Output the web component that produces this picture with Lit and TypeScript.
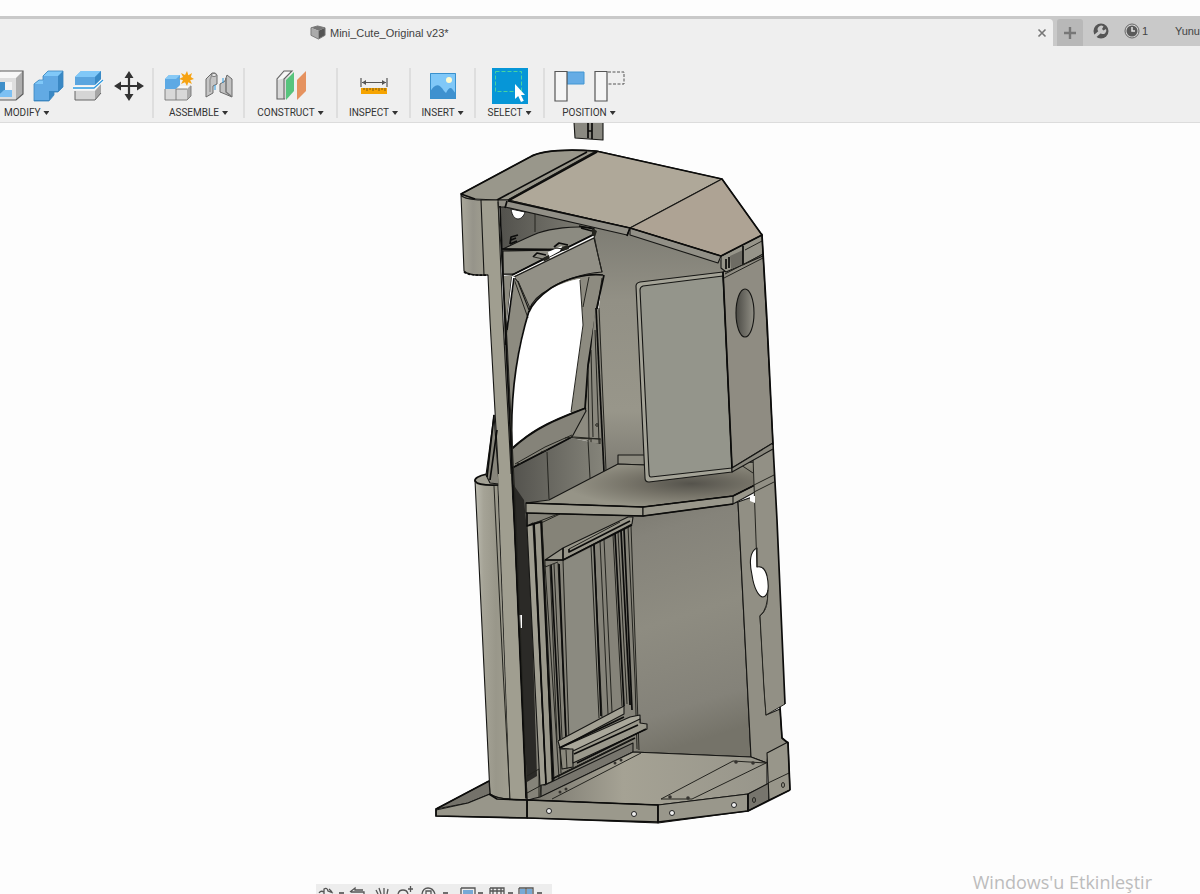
import { LitElement, html, svg, css } from "lit";
import { customElement } from "lit/decorators.js";

const box = (body: unknown) => html`<svg class="icon" viewBox="0 0 32 32" aria-hidden="true">${body}</svg>`;

const icons = {
  shell: box(svg`
    <path d="M-2 8 8 1H31L24 8Z" fill="#f7f7f7"/><path d="M24 8 31 1V24L24 30Z" fill="#aeaeae"/>
    <path d="M-2 8H24V30H-2Z" fill="#dedede"/><path d="M2 12H20V27H2Z" fill="#f3f3f3"/>
    <path d="M2 12H13V20L6 26H2Z" fill="#3f8fc9"/><path d="M6 26 12 20H20V27H5Z" fill="#7cc0f3"/>
    <path d="M-2 8 8 1H31V24L24 30H-2" fill="none" stroke="#5c5c5c" stroke-width="1.2"/>`),
  combine: box(svg`
    <path d="M2 14 7 10H11V6L16 1H31V17L26 22H22V25L17 31H2Z" fill="#3a88c4"/>
    <path d="M2 14H11V6H26V21H17V30H2Z" fill="#62aae4"/>
    <path d="M11 6 16 1H31L26 6ZM2 14 7 10H11V14Z" fill="#80c8f8"/>
    <path d="M2 14 7 10H11V6L16 1H31V17L26 22H22V25L17 31H2Z" fill="none" stroke="#3b86bf" stroke-width=".8"/>`),
  split: box(svg`
    <path d="M3 7 9 1H29V9L23 15H3Z" fill="#5ba5df"/><path d="M3 7 9 1H29L23 7Z" fill="#80c8f8"/>
    <path d="M23 7 29 1V9L23 15Z" fill="#398ac6"/><path d="M3 21H23L29 15V23L23 30H3Z" fill="#d5d5d5"/>
    <path d="M23 21 29 14V23L23 30Z" fill="#a5a5a5"/><path d="M3 21V30H23L29 23" fill="none" stroke="#666"/>
    <path d="M1 18H22L31 10" fill="none" stroke="#fff" stroke-width="3"/>
    <path d="M1 18H22L31 10" fill="none" stroke="#2d99df" stroke-width="1.3"/>`),
  move: box(svg`
    <path d="M17 5V27M6 16H28" stroke="#333" stroke-width="2.2"/>
    <path d="M17 1 21.500 8H12.500ZM17 31 21.500 24H12.500ZM2 16 9 11.500V20.500ZM32 16 25 11.500V20.500Z" fill="#333"/>`),
  component: box(svg`
    <path d="M2 9 6 5H17V15L13 19H2Z" fill="#5da9e4"/><path d="M2 9 6 5H17L13 9Z" fill="#87c9f5"/>
    <path d="M13 19V30H2V19ZM13 19H24V30H13Z" fill="#d8d8d8"/><path d="M13 19 17 16H28L24 19Z" fill="#f8f8f8"/>
    <path d="M24 19 28 15V26L24 30Z" fill="#aaa"/><path d="M2 19V30H24L28 26V16M13 19V30M13 19H24" fill="none" stroke="#777" stroke-width=".9"/>
    <path d="M24 1 25.400 5.300 29 3 27.800 7 31 9 27.200 10.200 29 14 25.300 12.300 24 16 22 12.300 18 14 20 10.200 16 9 20 7 18 3 22 5Z" fill="#f6a313"/>`),
  joint: box(svg`
    <path d="M3 9 9 3Q13 2 14 5V14L10 16V23L3 27Z" fill="#c5c5c5" stroke="#6a6a6a"/>
    <path d="M9 4 7 10V22" fill="none" stroke="#999" stroke-width="1.500"/><ellipse cx="11" cy="5" rx="2.500" ry="1.500" fill="#f0f0f0" stroke="#777"/>
    <path d="M17 14 22 11 24 5 29 9V27L22 24 17 22Z" fill="#c2c2c2" stroke="#6a6a6a"/><path d="M23 8V22L28 26" fill="none" stroke="#777" stroke-width="1.500"/>
    <path d="M12 15V20M20 8V13" stroke="#2d99df"/>`),
  construct: box(svg`
    <path d="M2 10 10 2H16L11 10V29H2Z" fill="#d8d8d8"/><path d="M2 10 10 2H17L11 8Z" fill="#f7f7f7"/>
    <path d="M10 29H2V9L9 1H17L9 9V29" fill="none" stroke="#636363" stroke-width="1.100"/>
    <path d="M11 10 19 2V21L11 30Z" fill="#57c47d"/><path d="M22 10 31 1V21L22 30Z" fill="#e5925f"/>`),
  inspect: box(svg`
    <path d="M3 8V17M29 8V17M4 12.500H28" stroke="#555" stroke-width="1.200"/><path d="M4 12.500 8 10V15ZM28 12.500 24 10V15Z" fill="#555"/>
    <path d="M3 18H29V24H3Z" fill="#f6a400"/><path d="M6 18V20M9 18V21M12 18V20M15 18V21M18 18V20M21 18V21M24 18V20M27 18V21" stroke="#7b5815"/>`),
  insert: box(svg`
    <path d="M3 3H29V29H3Z" fill="#80c8f8"/><path d="M3 22Q10 9 17 21L19 23Q23 15 26 20L29 24V29H3Z" fill="#3e91cf"/>
    <circle cx="22" cy="10" r="3" fill="#fffbd0"/><path d="M3.500 3.500H28.500V28.500H3.500Z" fill="none" stroke="#3a91cd"/>`),
  select: html`<svg class="icon large" viewBox="0 0 36 36" aria-hidden="true">
    <path d="M3.500 3.500H29.500V23.500H3.500Z" fill="none" stroke="#46d3a0" stroke-dasharray="4 2"/>
    <path d="M23 16V31L26.200 28 29 34 31.800 32.700 29 27H33Z" fill="#fff"/></svg>`,
  capture: box(svg`
    <path d="M14 2H31V14H14Z" fill="#65ace5" stroke="#4296d2"/><path d="M2 1.500H14V31H2Z" fill="#f5f5f5" stroke="#555" stroke-width="1.200"/>`),
  revert: box(svg`
    <path d="M15 2H31V14H15" fill="none" stroke="#555" stroke-dasharray="3 1.500"/><path d="M2 1.500H14V31H2Z" fill="#f5f5f5" stroke="#555" stroke-width="1.200"/>`),
};

const groups = [
  { label: "MODIFY", cls: "modify", tools: [["Shell", icons.shell], ["Combine", icons.combine], ["Split body", icons.split], ["Move", icons.move]] },
  { label: "ASSEMBLE", cls: "wide", tools: [["New component", icons.component], ["Joint", icons.joint]] },
  { label: "CONSTRUCT", cls: "wider", tools: [["Offset plane", icons.construct]] },
  { label: "INSPECT", cls: "mid", tools: [["Measure", icons.inspect]] },
  { label: "INSERT", cls: "small", tools: [["Insert image", icons.insert]] },
  { label: "SELECT", cls: "narrow", tools: [["Select", icons.select]] },
  { label: "POSITION", cls: "last", tools: [["Capture position", icons.capture], ["Revert position", icons.revert]] },
];

@customElement("cabinet-model")
class CabinetModel extends LitElement {
  static styles = css`
    :host { display: block; }
    svg { display: block; width: 100%; height: auto; }
    .o { stroke: #161614; stroke-width: 1.1; stroke-linejoin: round; }
    .l { fill: none; stroke: #24241f; stroke-width: 1; }
    .h { fill: none; stroke: #0c0c0b; stroke-width: 1.7; stroke-linejoin: round; }
    .cap { fill: #a3a195; }
  `;

  render() {
    return html`<svg viewBox="0 123 1200 771" role="img" aria-label="Cabinet model">
      <defs>
        <linearGradient id="pod"><stop offset="0" stop-color="#aaa89b"/><stop offset=".5" stop-color="#96948a"/><stop offset="1" stop-color="#a09e90"/></linearGradient>
        <linearGradient id="column"><stop offset="0" stop-color="#bcbbb0"/><stop offset=".25" stop-color="#a5a396"/><stop offset=".6" stop-color="#99978a"/><stop offset="1" stop-color="#a09e90"/></linearGradient>
        <linearGradient id="back" x2=".15" y2="1"><stop offset="0" stop-color="#7b7970"/><stop offset=".15" stop-color="#85837a"/><stop offset=".5" stop-color="#8e8c81"/><stop offset=".85" stop-color="#848279"/><stop offset="1" stop-color="#757369"/></linearGradient>
        <linearGradient id="upper" x2="0" y2="1"><stop offset="0" stop-color="#77766e"/><stop offset=".35" stop-color="#929085"/><stop offset=".75" stop-color="#98968a"/><stop offset="1" stop-color="#79776f"/></linearGradient>
        <linearGradient id="inside"><stop offset="0" stop-color="#53524d"/><stop offset="1" stop-color="#85847a"/></linearGradient>
        <linearGradient id="floor"><stop offset="0" stop-color="#77756c"/><stop offset=".4" stop-color="#a5a294"/><stop offset="1" stop-color="#98968b"/></linearGradient>
        <radialGradient id="shelf" cx=".72" cy=".48" r=".55"><stop offset="0" stop-color="#55534c"/><stop offset=".5" stop-color="#777469"/><stop offset="1" stop-color="#969487"/></radialGradient>
        <linearGradient id="port"><stop offset="0" stop-color="#4b4a45"/><stop offset="1" stop-color="#929086"/></linearGradient>
      </defs>

      <path class="o" fill="#8a8981" d="M574 122H603L603 140 575 138Z"/>
      <path class="h" d="M588 122V138M592 122V139M588 131H592"/>

      <!-- back walls -->
      <path fill="url(#upper)" d="M500 203 628 232 722 260 763 245 773 450 753 480 645 466H619L604 472 596 330 603 275 593 232 503 250Z"/>
      <path class="o" fill="url(#back)" d="M630 514 738 502 751 757 633 752Z"/>
      <path class="o" fill="#918f84" d="M738 502 755 496 768 597Q769 609 760 616L766 715 780 709 782 738 788 743 768 753 767 763 751 757Z"/>

      <!-- inner left cavity -->
      <path fill="url(#inside)" d="M501 205 600 229 594 234 512 276 503 275Z"/>
      <path fill="#fff" stroke="#222" d="M511 209C512 216 515 219 518 219S524 216 525 212Z"/>
      <path class="l" d="M535 213V232"/>
      <path class="o" fill="#8c8b81" d="M503 249Q528 237 538 233C550 229 573 225 594 228L594 234 564 249 503 249Z"/>
      <path class="o" fill="#929187" d="M503 251 560 250 514 274 503 274Z"/>
      <path class="h" d="M502 249 562 250M512 275 593 235M514 278 594 239"/>
      <path d="M548 252 562 246 560 251 549 257Z" fill="#fff"/>
      <path class="h" d="M510 244 511 237 518 235M511 240 516 238M510 244 517 241M533 257 537 253 546 255M554 247 559 243 568 245M579 226 594 229M581 228 592 231"/>
      <path class="l" d="M534 257 543 259M555 248 565 249"/>
      <path fill="#25251f" d="M543 258 549 255 550 260 544 262ZM562 247 568 245 569 249 563 251ZM592 228 597 231 595 237 592 235Z"/>

      <!-- window frame -->
      <path fill="#8d8b80" d="M503 276H514L594 237 604 274C601 295 595 315 595 335L588 407 592 442 571 438V412L583 325 580 279C557 283 536 295 529 311C516 350 512 380 512 470L507 475Z"/>
      <path fill="#fff" d="M580 279C557 283 536 295 529 311C517 350 510 395 512 448C525 434 542 426 571 412L583 325Z"/>
      <path class="o" fill="#929086" d="M514 277 594 238 602 272C583 273 560 281 548 290Q534 297 529 310L518 282Z"/>
      <path class="h" d="M529 312C533 302 541 295 551 288C567 278 588 273 603 275"/>
      <path class="l" d="M514 279 528 318M518 281 530 308M594 235 598 255 602 272M580 280 583 325 571 412M589 277 583 307M602 278 598 305 588 368 586 407"/>
      <path class="h" d="M604 275 597 307 588 365 585 408M529 311C517 350 510 395 512 448M512 277 505 345"/>
      <path fill="#fff" d="M512 276 515 277 508 325 507 320Z"/>
      <path class="h" d="M514 278 507 330"/>

      <!-- narrow post behind window -->
      <path fill="#89877d" d="M595 308 600 310 605 473 590 473 586 407Z"/>
      <path class="h" d="M596 308 604 472"/>
      <path class="l" d="M588 370 589 440M599 308 606 470M591 350 593 437M595 330 600 470M572 438 600 439V444H591V438"/>
      <circle class="l" cx="597" cy="425" r="1.300"/>

      <!-- lower window panel -->
      <path fill="url(#inside)" d="M511 468Q545 450 572 438L600 444 603 473 550 500 526 504 525 800H518Z"/>
      <path class="o" fill="#858379" d="M512 448C529 433 543 423 585 408L586 411 572 437 545 451 512 468Z"/>
      <path class="h" d="M512 449C533 429 555 420 586 408M512 468 545 451 572 437"/>
      <path class="l" d="M515 464 545 447 572 435M547 452 549 499M588 440 590 478M517 463 521 464M541 452 548 450M565 438 574 437 601 439"/>

      <!-- lower cavity and sliding frame -->
      <path fill="#858379" d="M526 513 632 516 637 750 540 798 526 799 520 600Z"/>
      <path fill="#2b2a27" d="M513 484 524 500 530 560 537 776 527 782 522 690Z"/>
      <path class="l" d="M527 776 539 769V798M527 793 540 786"/>
      <path fill="#fff" d="M519 615H522V628H520Z"/>
      <path class="o" fill="#a09e91" d="M527 526 533 523 546 784 540 786Z"/>
      <path class="o" fill="#99978a" d="M534 523 542 521 554 781 546 784Z"/>
      <path fill="#858378" d="M542 521 555 514H620L632 516 563 548 545 560Z"/>
      <path class="l" d="M527 526 558 514M541 523 560 514M542 521 552 782M545 565 559 778"/>
      <path class="h" d="M527 513V526L541 522 553 782M534 523 546 784"/>
      <path fill="#8b8a80" d="M563 562 594 546 600 717 569 740Z"/>
      <path class="l" d="M550 566 557 740M554 564 562 738M558 563 566 740M563 560 569 740M591 546 599 718M594 544 602 717M600 541 608 714M604 539 612 712M613 535 622 706M618 532 627 704M628 526 635 680 637 749M631 526 639 750"/>
      <path class="h" d="M551 565 560 740M559 564 566 737M594 545 601 716M615 533 624 706M621 531 630 705M624 529 632 710"/>
      <path class="o" fill="#98968a" d="M545 560 563 548 628 517 633 517 632 524 563 560Z"/>
      <path class="h" d="M563 548V560M569 549V552L630 521M545 560H563L632 525"/>
      <path class="l" d="M569 549 620 522M545 560V567L558 562"/>
      <path class="o" fill="#a3a194" d="M558 741 624 706V714L560 748Z"/>
      <path class="o" fill="#aaa89b" d="M560 748 630 717 640 715 640 723 573 754V762L569 749Z"/>
      <path class="o" fill="#8a887d" d="M560 749H573V767L562 769Z"/>
      <path class="o" fill="#9a988b" d="M573 751 640 719 640 723 647 724V729L638 733 573 763Z"/>
      <path class="h" d="M559 748 624 717M577 763 646 729M574 754 638 725M552 779 635 738"/>
      <path class="o" fill="#77756d" d="M545 785 633 743V752L541 797V785Z"/>
      <path class="l" d="M555 777 632 739M560 749 561 773M566 750 567 769"/>

      <!-- floor and front lip -->
      <path class="o" fill="url(#floor)" d="M540 797 633 752 751 757 767 763V785L748 794 658 805 527 800Z"/>
      <path class="l" d="M552 799 641 753M661 799 733 761 766 763M692 799 766 763M661 799 692 799M541 785 540 797"/>
      <g fill="#35332f"><circle cx="560" cy="792" r="1.500"/><circle cx="566" cy="789" r="1.500"/><circle cx="615" cy="763" r="1.500"/><circle cx="621" cy="760" r="1.500"/><circle cx="670" cy="797" r="1.800"/><circle cx="688" cy="798" r="1.800"/><circle cx="736" cy="762" r="1.800"/><circle cx="753" cy="763" r="1.800"/></g>
      <path class="o" fill="#9b998c" d="M527 800 658 805V823L527 818Z"/>
      <path class="o" fill="#99978b" d="M658 805 748 794V811L658 823Z"/>
      <path class="o" fill="#77756d" d="M748 794 769 783V800L748 811Z"/>
      <path class="o" fill="#98968a" d="M767 753 788 742 790 790 769 800Z"/>
      <path class="l" d="M768 783 789 773"/>
      <path class="h" d="M527 818 658 822 748 811 790 790M527 800 658 805V822M748 794V811"/>
      <g fill="#eee" stroke="#222"><circle cx="549" cy="811" r="2.500"/><circle cx="634" cy="814" r="2.500"/><circle cx="672" cy="813" r="2.500"/><circle cx="734" cy="805" r="2.500"/></g>
      <g class="l"><ellipse cx="754" cy="800" rx="1.500" ry="2.500"/><ellipse cx="783" cy="785" rx="1.500" ry="2.500"/></g>

      <!-- shelf -->
      <path class="o" fill="#8c8a7f" d="M618 455H645V465L618 464Z"/>
      <path class="o" fill="url(#shelf)" d="M526 503 549 500 618 464 645 465 755 462V485L733 496 643 507Z"/>
      <path class="o" fill="#9e9c8f" d="M526 503 643 507V516L526 513Z"/>
      <path class="o" fill="#99978b" d="M643 507 733 496V504L643 516ZM733 496 755 485V492L733 504Z"/>
      <path class="h" d="M526 503 643 507 733 496 755 485M526 513 643 516 733 504"/>

      <!-- right service wall -->
      <path fill="#929085" d="M753 457 773 448 777 520 785 704 766 715 760 616C766 612 768 605 768 597L757 567Z"/>
      <path class="o" fill="#fff" d="M757 548C750 551 749 562 752 575C754 589 759 597 763 597C769 596 769 585 767 576C765 568 761 566 757 567Z"/>
      <path class="l" d="M753 457 757 567M768 590Q768 609 760 616L764 690 766 715 785 704M738 463 753 473M754 485 774 475M754 492 774 482"/>
      <path d="M750 496H755V503L750 501Z" fill="#fff"/>
      <path class="h" d="M773 445 777 520 785 704M780 707 782 738 788 743 790 790"/>

      <!-- electrical door and side -->
      <path class="o" fill="#a4a397" d="M636 286Q636 283 640 282L723 272 732 472 649 482Q645 482 645 478Z"/>
      <path class="o" fill="#94958b" d="M640 290Q640 287 643 286L723 276 732 468 651 477Q649 477 649 473Z"/>
      <path class="o" fill="#8f8c82" d="M723 272 763 253 773 443 732 468Z"/>
      <path class="o" fill="#89877d" d="M732 468 773 443V449L732 472Z"/>
      <path class="o" fill="#969489" d="M721 256 762 234 763 256 726 272 721 268Z"/>
      <path fill="#6e6c64" d="M730 256 743 250V264L731 269Z"/>
      <path class="h" d="M726 259V269M729 257V268M743 246V265"/>
      <path class="l" d="M724 278 763 258M725 274 763 254M743 265 763 254M745 250 762 241"/>
      <ellipse class="o" cx="745" cy="313" rx="9" ry="24" fill="url(#port)"/>
      <path class="h" d="M762 235 767 320 773 445M723 272 732 468"/>

      <!-- roof -->
      <path class="o" fill="#99978b" d="M461 194 530 157C540 151 565 149 596 151L508 200 497 200 475 199Q462 199 461 194Z"/>
      <path class="o" fill="#afa899" d="M508 200 597 151 722 179 630 228Z"/>
      <path class="o" fill="#aea394" d="M630 228 722 179 762 235 721 256Z"/>
      <path class="o" fill="#929087" d="M497 200 508 200 630 228 627 235 505 207 498 207ZM630 228 721 256 718 263 630 235Z"/>
      <path class="h" d="M475 199 461 194 530 157C540 151 565 149 596 151L722 179 762 235 721 256 630 228 508 201M497 200 587 152M508 201 597 152M507 201 505 208M630 228 627 236"/>

      <!-- front column -->
      <path class="o" fill="url(#pod)" d="M461 195Q463 199 478 200H483L485 275Q469 276 464 271Z"/>
      <path class="o" fill="#a09e90" d="M481 200 498 200 503 320 512 490 514 520 527 799H510L499 484 490 320 488 275H484Z"/>
      <path class="h" d="M464 272Q470 276 488 275" stroke-dasharray="3 1"/>
      <path class="l" d="M498 202 507 340 516 520 527 799"/>
      <path class="h" d="M500 206 505 320 513 490 526 798"/>
      <path class="o" fill="url(#column)" d="M475 480Q476 484 498 485L510 799Q497 799 490 794Z"/>
      <path class="h cap" d="M487 474Q474 477 475 481Q478 486 499 485L497 474Z"/>
      <path class="o" fill="#87857b" d="M494 415 486 475 490 483 499 484Z"/>
      <path class="h" d="M494 415 487 477M497 430 490 480"/>
      <path fill="#a09e90" d="M498 474 511 474 525 799H510Z"/>
      <path class="l" d="M494 486 503 670 510 799"/>

      <!-- left foot -->
      <path class="o" fill="#74726a" d="M436 809 489 781 490 794 468 803Z"/>
      <path class="o" fill="#98968a" d="M436 810 468 803 490 794Q498 800 527 800V818L436 816Z"/>
      <path class="h" d="M489 781 436 809V816L527 818V800L497 799 489 794"/>
    </svg>`;
  }
}

@customElement("app-root")
class AppRoot extends LitElement {
  static styles = css`
    :host { display: flex; flex-direction: column; min-height: 100vh; position: relative; background: #fdfdfd; color: #444; font-family: "Liberation Sans", Arial, sans-serif; overflow: hidden; box-sizing: border-box; padding-top: 16px; }
    * { box-sizing: border-box; }
    button { border: 0; background: none; margin: 0; padding: 0; color: inherit; font: inherit; display: flex; align-items: center; justify-content: center; flex: none; }
    .tabs { display: flex; height: 30px; background: #c9c9c9; }
    .tab { flex: 1; margin-top: 3px; background: #efefef; border-radius: 0 4px 0 0; display: flex; align-items: center; justify-content: space-between; padding: 0 5px 0 310px; }
    .title { display: flex; align-items: center; gap: 4px; font-size: 11px; line-height: 16px; color: #3f3f3f; white-space: nowrap; }
    .cube { width: 16px; height: 15px; }
    .close { width: 12px; height: 12px; }
    .close svg { width: 12px; height: 12px; }
    .actions { width: 147px; display: flex; white-space: nowrap; font-size: 11px; padding-left: 4px; }
    .add { width: 26px; background: #b8b8b8; margin-top: 3px; border-radius: 3px 3px 0 0; }
    .add svg { width: 14px; height: 14px; }
    .status { width: 16px; margin-left: 10px; }
    .clock { margin-left: 15px; gap: 2px; }
    .status svg, .clock svg { width: 16px; height: 16px; flex: none; }
    .user { margin-left: auto; }
    .toolbar { display: flex; background: #efefef; border-bottom: 1px solid #dcdcdc; height: 77px; padding-top: 22px; }
    .group { display: flex; flex-direction: column; align-items: center; height: 50px; border-right: 2px solid #dedede; flex: none; }
    .modify { width: 154px; align-items: flex-start; }
    .modify .tools { margin-left: -8px; }
    .modify .menu { margin-left: 4px; }
    .wide { width: 91px; }
    .wider { width: 93px; }
    .mid { width: 73px; }
    .small { width: 65px; }
    .narrow { width: 69px; }
    .last { width: 90px; border-color: transparent; }
    .tools { display: flex; gap: 8px; height: 36px; align-items: center; flex: none; }
    .icon { width: 32px; height: 32px; display: block; }
    .large { width: 36px; height: 36px; background: #0696d7; }
    .menu { gap: 3px; height: 18px; font-family: Roboto, sans-serif; font-size: 10px; line-height: 12px; color: #333; white-space: nowrap; }
    .arrow { width: 6px; height: 4px; background: #333; clip-path: polygon(0 0, 100% 0, 50% 100%); }
    .canvas { flex: 1; }
    .navbar { position: absolute; left: 316px; bottom: 0; width: 236px; height: 10px; overflow: hidden; background: #ededed; }
    .navbar svg { display: block; width: 236px; height: 10px; }
    .watermark { position: absolute; right: 48px; bottom: 0; font-family: "Open Sans", sans-serif; font-size: 18px; line-height: 24px; color: #bcbcbc; white-space: nowrap; }
  `;

  render() {
    return html`
      <header class="tabs">
        <div class="tab">
          <span class="title"><svg class="cube" viewBox="0 0 17 16" aria-hidden="true"><path d="M1 3 8 1 16 3 9 6Z" fill="#777"/><path d="M1 3 9 6V15L1 11Z" fill="#aaa"/><path d="M9 6 16 3V11L9 15Z" fill="#555"/><path d="M1 3 8 1 16 3V11L9 15 1 11Z" fill="none" stroke="#777"/></svg>Mini_Cute_Original v23*</span>
          <button class="close" aria-label="Close tab"><svg viewBox="0 0 12 12"><path d="M2.500 2.500 9.500 9.500M9.500 2.500 2.500 9.500" stroke="#777" stroke-width="1.600"/></svg></button>
        </div>
        <div class="actions">
          <button class="add" aria-label="New tab"><svg viewBox="0 0 14 14"><path d="M7 1V13M1 7H13" stroke="#777" stroke-width="2.400"/></svg></button>
          <button class="status" aria-label="Extensions"><svg viewBox="0 0 16 16"><circle cx="8" cy="8" r="7.500" fill="#555"/><path d="M1 14 8 8" stroke="#c9c9c9" stroke-width="3"/><path d="M6 9A3.500 3.500 0 0 1 10.500 3.500L9 6 10.500 7.500 13 6A3.500 3.500 0 0 1 8 10.500Z" fill="#c9c9c9"/></svg></button>
          <button class="clock" aria-label="Job status, 1"><svg viewBox="0 0 16 16"><circle cx="8" cy="8" r="7" fill="#d5d5d5" stroke="#666"/><circle cx="8" cy="8" r="5.500" fill="#5a5a5a"/><path d="M8 4V8H11" fill="none" stroke="#e5e5e5" stroke-width="1.500"/></svg>1</button>
          <button class="user">Yunu</button>
        </div>
      </header>
      <nav class="toolbar" aria-label="Tools">
        ${groups.map((g) => html`<section class="group ${g.cls}">
          <div class="tools">${g.tools.map(([name, icon]) => html`<button aria-label=${name}>${icon}</button>`)}</div>
          <button class="menu">${g.label}<span class="arrow"></span></button>
        </section>`)}
      </nav>
      <main class="canvas"><cabinet-model></cabinet-model></main>
      <div class="navbar"><svg viewBox="0 0 236 10" aria-label="View controls" role="img">
        <g fill="none" stroke="#555" stroke-width="1.300">
          <path d="M3 9Q5 6 8 8M8 10V5Q11 3 12 7L17 9M13 5 16 8M35 8H48V10M34 8 39 4V6H47M62 10 60 6M65 10 63 4M68 10V4M71 10 72 5M82 10Q83 6 87 6T92 10M92 5H97M94.500 2V8M106 10Q107 4 112 4T119 10M110 10V7H115V10"/>
          <path d="M145 4H159V10M145 4V10M174 4H188V10M174 4V10M174 7H188M177 4V10M181 4V10M185 4V10M203 4H217V10M203 4V10M210 4V10"/>
        </g><path d="M147 6H157V10H147ZM204 5H209V10H204ZM211 5H216V10H211Z" fill="#78a9d6"/>
        <path d="M23 9H28M127 9H132M162 9H167M192 9H197M221 9H226" stroke="#444" stroke-width="1.500"/>
      </svg></div>
      <span class="watermark">Windows'u Etkinleştir</span>`;
  }
}
